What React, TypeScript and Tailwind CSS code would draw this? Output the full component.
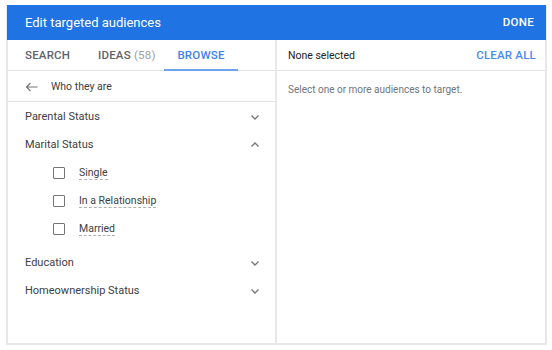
import React from "react";

const Chevron = ({ up = false }: { up?: boolean }) => (
  <svg width="12" height="12" viewBox="0 0 12 12" className="text-[#757575]">
    <path
      d={up ? "M2.5 7.5 L6 4 L9.5 7.5" : "M2.5 4.5 L6 8 L9.5 4.5"}
      fill="none"
      stroke="currentColor"
      strokeWidth="1.3"
    />
  </svg>
);

const Group = ({ label, up = false }: { label: string; up?: boolean }) => (
  <div className="flex items-center justify-between h-[28px] pl-[17px] pr-[14px] text-[11px] text-[#3c4043]">
    <span>{label}</span>
    <Chevron up={up} />
  </div>
);

const Option = ({ label }: { label: string }) => (
  <div className="flex items-center h-[28px] pl-[45px]">
    <span className="w-[12px] h-[12px] border-[1.5px] border-[#757575] rounded-[1px]" />
    <span className="ml-[14px] text-[10.5px] text-[#3c4043] border-b border-dashed border-[#b0b0b0] leading-[13px]">
      {label}
    </span>
  </div>
);

export default function App() {
  return (
    <div className="w-[552px] h-[350px] bg-white pt-[5px] pl-[6px] font-['Roboto',sans-serif]">
      <div className="w-[541px] h-[340px] flex flex-col border-x-2 border-b-2 border-[#e8e8e8]">
        {/* Header */}
        <div className="h-[35px] -mx-[1px] bg-[#1f73e3] flex items-center justify-between pl-[18px] pr-[12px] text-white">
          <span className="text-[13px]">Edit targeted audiences</span>
          <span className="text-[11.5px] font-medium tracking-[0.3px]">DONE</span>
        </div>

        <div className="flex flex-1">
          {/* Left */}
          <div className="w-[269px] border-r-2 border-[#e8e8e8] flex flex-col">
            <div className="h-[31px] pt-[1px] flex items-end border-b border-[#e3e3e3] text-[11.5px] font-medium tracking-[0.2px]">
              <div className="pl-[17px] w-[90px] h-full flex items-center text-[#5f6368]">SEARCH</div>
              <div className="w-[66px] h-full flex items-center text-[#5f6368]">
                IDEAS&nbsp;<span className="text-[#9aa0a6] font-normal">(58)</span>
              </div>
              <div className="w-[74px] h-full flex items-center justify-center text-[#3b82f0] border-b-2 border-[#6fa3f0] -mb-[1px]">
                BROWSE
              </div>
            </div>
            <div className="h-[31px] pt-[1px] flex items-center pl-[17px] border-b border-[#e3e3e3] text-[10.5px] text-[#3c4043]">
              <svg width="13" height="10" viewBox="0 0 13 10" className="text-[#757575]">
                <path d="M12.5 5 H1.5 M5.5 1 L1.5 5 L5.5 9" fill="none" stroke="currentColor" strokeWidth="1.2" />
              </svg>
              <span className="ml-[13px]">Who they are</span>
            </div>
            <div className="pt-[1px]">
              <Group label="Parental Status" />
              <Group label="Marital Status" up />
              <Option label="Single" />
              <Option label="In a Relationship" />
              <Option label="Married" />
              <div className="h-[6px]" />
              <Group label="Education" />
              <Group label="Homeownership Status" />
            </div>
          </div>

          {/* Right */}
          <div className="flex-1 flex flex-col">
            <div className="h-[31px] pt-[1px] flex items-center justify-between pl-[11px] pr-[9px] border-b border-[#e3e3e3]">
              <span className="text-[10.5px] text-[#202124]">None selected</span>
              <span className="text-[11.5px] font-medium text-[#4a8af4] tracking-[0.2px]">CLEAR ALL</span>
            </div>
            <div className="pl-[11px] pt-[11px] text-[10px] text-[#70757a]">
              Select one or more audiences to target.
            </div>
          </div>
        </div>
      </div>
    </div>
  );
}
